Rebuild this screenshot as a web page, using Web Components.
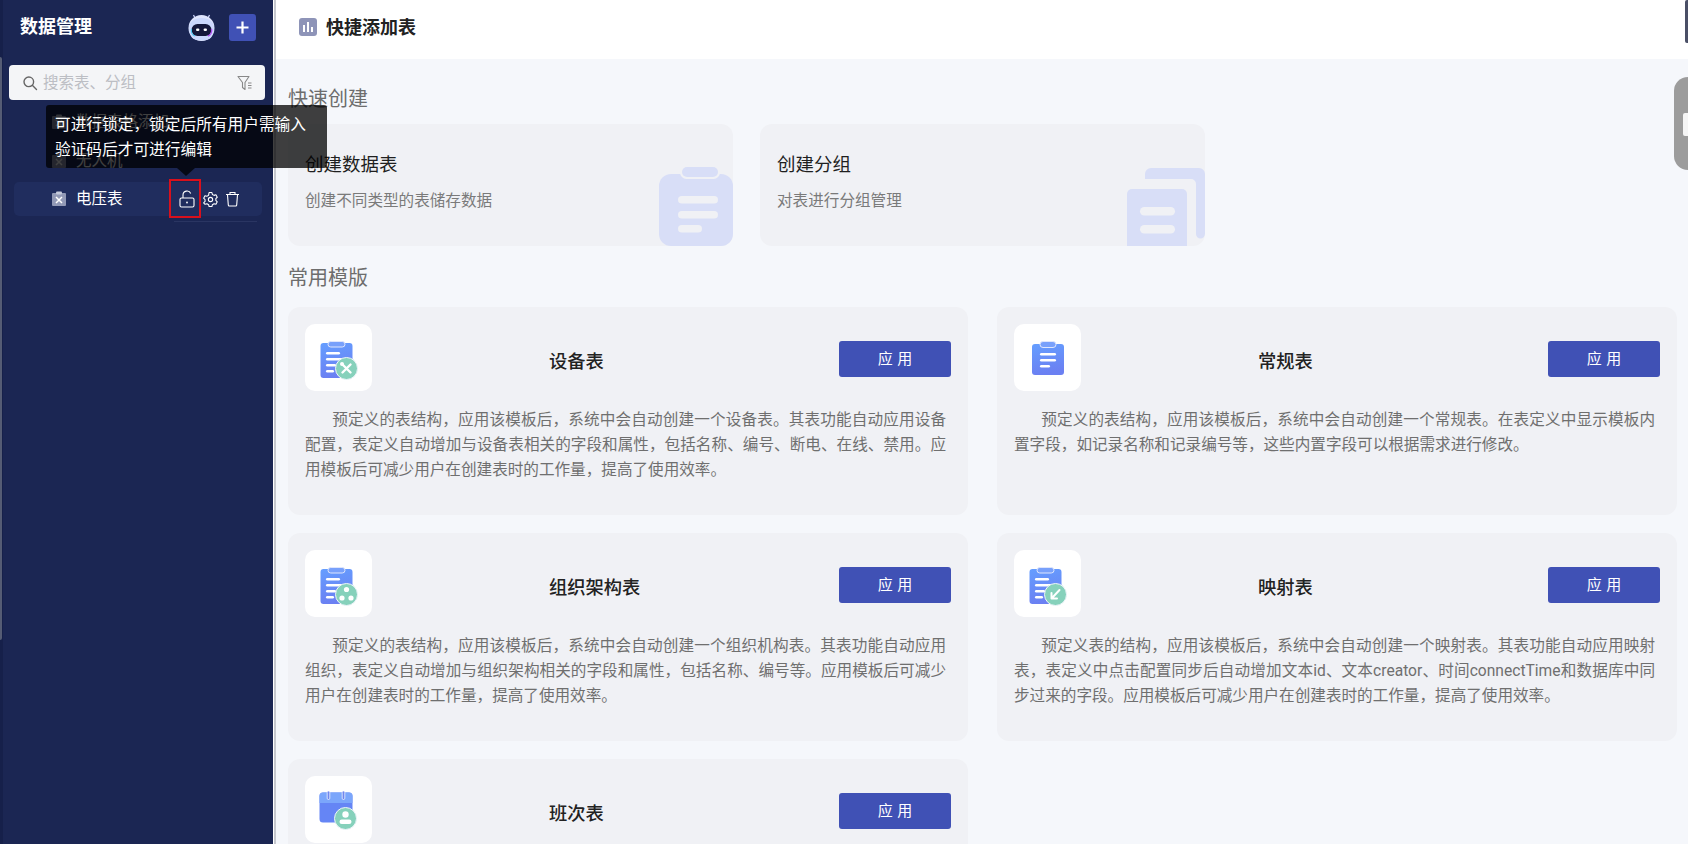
<!DOCTYPE html>
<html lang="zh"><head><meta charset="utf-8"><style>
html,body{margin:0;height:100%;overflow:hidden}
body{font-family:Roboto,"Noto Sans CJK SC",sans-serif;background:#f5f7fb}
</style></head><body>
<app-shell></app-shell>
<script>
const FONT='Roboto,"Noto Sans CJK SC",sans-serif';
const grad=(id)=>`<defs><linearGradient id="${id}" x1="0" y1="0" x2="0.2" y2="1"><stop offset="0" stop-color="#659eff"/><stop offset="1" stop-color="#6b80f2"/></linearGradient></defs>`;
const clipIcon=(id,inner)=>`<svg width="40" height="40" viewBox="0 0 40 40" style="overflow:visible">${grad(id)}
<path d="M4.500 5h26a3 3 0 0 1 3 3v29a3 3 0 0 1-3 3h-26a3 3 0 0 1-3-3V8a3 3 0 0 1 3-3z" fill="url(#${id})"/>
<rect x="9" y="3.500" width="17" height="5.500" rx="2.750" fill="#78a0fb" stroke="#dfe6fc" stroke-width="1"/>
<rect x="7" y="14" width="14" height="2.400" rx="1.200" fill="#fff"/><rect x="7" y="20" width="17" height="2.400" rx="1.200" fill="#fff"/><rect x="7" y="26" width="10" height="2.400" rx="1.200" fill="#fff"/><rect x="7" y="32" width="8" height="2.400" rx="1.200" fill="#fff"/>
<circle cx="27.500" cy="30.500" r="11" fill="#86d1bb" stroke="#eef4fa" stroke-width="1"/>${inner}</svg>`;
const ICONS={
 tool:clipIcon('a',`<path d="M23.500 26.500l8 8M31.500 26.500l-8 8" stroke="#fff" stroke-width="2.400" stroke-linecap="round"/><circle cx="23" cy="26" r="2" fill="#fff"/>`),
 plain:`<svg width="34" height="34" viewBox="0 0 34 34">${grad('b')}<path d="M4 3h26a3 3 0 0 1 3 3v25a3 3 0 0 1-3 3H4a3 3 0 0 1-3-3V6a3 3 0 0 1 3-3z" fill="url(#b)"/><rect x="9" y="0.500" width="16" height="6" rx="3" fill="#78a0fb" stroke="#dfe6fc"/><rect x="9" y="12" width="16" height="2.600" rx="1.300" fill="#fff"/><rect x="9" y="18" width="16" height="2.600" rx="1.300" fill="#fff"/><rect x="9" y="24" width="10" height="2.600" rx="1.300" fill="#fff"/></svg>`,
 org:clipIcon('c',`<circle cx="27.500" cy="25.500" r="2.600" fill="#fff"/><circle cx="23" cy="34" r="2.600" fill="#fff"/><circle cx="32" cy="34" r="2.600" fill="#fff"/>`),
 map:clipIcon('d',`<path d="M31.500 26l-8 8.500M23.500 29v5.500h5.500" stroke="#fff" stroke-width="2" fill="none" stroke-linecap="round" stroke-linejoin="round"/>`),
 cal:`<svg width="40" height="40" viewBox="0 0 40 40" style="overflow:visible"><path d="M4 2.500h26a3.500 3.500 0 0 1 3.500 3.500v23a3.500 3.500 0 0 1-3.500 3.500H4A3.500 3.500 0 0 1 .5 29V6A3.500 3.500 0 0 1 4 2.500z" fill="#6585f5"/><path d="M4 2.500h26a3.500 3.500 0 0 1 3.500 3.500v7H.5V6A3.500 3.500 0 0 1 4 2.500z" fill="#7ba6fb"/><rect x="8.200" y="1" width="2.600" height="8.500" rx="1.300" fill="#6f86ee" stroke="#fff" stroke-width=".7"/><rect x="23.200" y="1" width="2.600" height="8.500" rx="1.300" fill="#6f86ee" stroke="#fff" stroke-width=".7"/><circle cx="26.500" cy="28.500" r="11" fill="#86d1bb" stroke="#eef4fa" stroke-width="1"/><circle cx="26.500" cy="24.500" r="3.200" fill="#fff"/><rect x="20.500" y="29.500" width="12" height="4.500" rx="2.250" fill="#fff"/></svg>`
};
function def(name,html){customElements.define(name,class extends HTMLElement{constructor(){super();this.attachShadow({mode:'open'}).innerHTML=html;}});}

def('search-box',`<style>
:host{display:flex;align-items:center;height:35px;background:#f4f5f7;border-radius:4px;padding:0 12px 0 13px;color:#bcbec4;font-size:15.500px;gap:5px;line-height:1}
span{flex:1;padding-top:2px}
</style><svg width="16" height="16" viewBox="0 0 16 16" fill="none" stroke="#666" stroke-width="1.400"><circle cx="6.800" cy="6.800" r="4.800"/><path d="M10.300 10.300L14.500 14.500" stroke-linecap="round"/></svg><span>搜索表、分组</span><svg width="16" height="16" viewBox="0 0 16 16" fill="none" stroke="#888" stroke-width="1.100"><path d="M1 1.500h11L8 7.500v7L5.500 12.500V7.500z" stroke-linejoin="round"/><path d="M11 8h3.500M11 10.500h3.500M11 13h3.500"/></svg>`);

def('tree-row',`<style>
:host{display:flex;align-items:center;height:34px;box-sizing:border-box;padding:2px 0 0 37px;font-size:15.500px;color:#fff;line-height:1;position:relative}
:host([active]){background:#202d5e;border-radius:5px}
.ico{width:16px;height:16px;margin:-2px 9px 0 0;display:flex}
.actions{position:absolute;left:164px;top:0;height:34px;display:flex;align-items:center}
</style><span class="ico"><slot name="icon"></slot></span><slot></slot><div class="actions"><slot name="actions"></slot></div>`);

def('app-sidebar',`<style>
:host{display:block;position:relative;z-index:3;width:273px;height:844px;flex:none;background:#1b2653;color:#fff;box-sizing:border-box}
.edge{position:absolute;left:0;top:0;bottom:0;width:3px;background:#16204a}
.edge2{position:absolute;left:0;top:57px;height:583px;width:2px;background:#555c74;border-radius:0 3px 3px 0}
.head{display:flex;align-items:center;height:54px;padding:0 17px 0 20px;gap:14px}
.title{font-size:18px;font-weight:700;flex:1;line-height:1;padding-bottom:1px}
.add{width:27px;height:27px;border-radius:3px;background:#4051b5;display:flex;align-items:center;justify-content:center}
.bot{width:27px;height:27px}
.body{padding:11px 8px 0 9px}
.list{padding:5px 3px 0 5px;display:flex;flex-direction:column}
</style>
<div class="edge"></div><div class="edge2"></div>
<div class="head"><span class="title">数据管理</span>
<svg class="bot" viewBox="0 0 27 27"><line x1="7" y1="4" x2="5.500" y2="1" stroke="#cfd8ff" stroke-width="1.300"/><line x1="20" y1="4" x2="21.500" y2="1" stroke="#cfd8ff" stroke-width="1.300"/><circle cx="13.500" cy="14" r="13" fill="#dfe5fd"/><path d="M1 13c0-5 5-9 12.500-9S26 8 26 13c0 6-1.500 10-5 12-4 2-11 2-15 0-3.500-2-5-6-5-12z" fill="#cbd7fc"/><rect x="3.500" y="10" width="20" height="12" rx="6" fill="#14173a"/><rect x="8" y="14.500" width="3.400" height="2.600" rx="1.300" fill="#fff"/><rect x="15.600" y="14.500" width="3.400" height="2.600" rx="1.300" fill="#fff"/><path d="M20 22a6 6 0 0 0 3.500-7" stroke="#b04ef0" stroke-width="1.400" fill="none"/><path d="M7 22a6 6 0 0 1-3.500-7" stroke="#4ec7f0" stroke-width="1.200" fill="none"/></svg>
<span class="add"><svg width="13" height="13" viewBox="0 0 13 13"><path d="M6.500 0.500v12M.5 6.500h12" stroke="#fff" stroke-width="2.200"/></svg></span></div>
<div class="body"><slot name="search"></slot><div class="list"><slot></slot></div></div>
<slot name="over"></slot>`);

def('hint-tip',`<style>
:host{display:block;position:absolute;left:46px;top:105px;width:281px;height:63px;box-sizing:border-box;padding:8px 0 0 9px;background:rgba(0,0,0,.75);border-radius:3px;color:#fff;font-size:15.700px;line-height:24.500px;z-index:5;white-space:nowrap}
:host::after{content:"";position:absolute;left:131px;top:100%;border:9px solid transparent;border-top:8px solid rgba(0,0,0,.75);border-bottom:0}
</style><slot></slot>`);

def('lock-mark',`<style>
:host{display:block;position:absolute;left:169px;top:179px;width:32px;height:39px;box-sizing:border-box;border:2px solid #d8101c;z-index:6}
</style>`);

def('top-bar',`<style>
:host{display:flex;align-items:center;height:59px;box-sizing:border-box;padding:0 0 3px 23px;background:#fff;font-size:18px;font-weight:700;color:#222;gap:9px;line-height:1;position:relative}
.ic{width:18px;height:18px;margin-top:-2px;background:#8e94b8;border-radius:3px;display:flex;align-items:flex-end;justify-content:center;gap:2px;padding-bottom:4px;box-sizing:border-box}
i{display:block;width:2px;background:#fff}
.b{position:absolute;right:0;top:0;width:3px;height:43px;background:#4a4f66;border-radius:2px 0 0 2px}
</style><span class="ic"><i style="height:7px"></i><i style="height:10px"></i><i style="height:5px"></i></span><slot></slot><span class="b"></span>`);

def('section-title',`<style>
:host{display:block;font-size:20px;color:#6d6d6d;line-height:28px;height:28px;box-sizing:border-box;padding-top:2px}
</style><slot></slot>`);

def('quick-card',`<style>
:host{display:block;position:relative;width:445px;height:122px;background:#f0f1f5;border-radius:12px;box-sizing:border-box;padding:29px 17px 0;overflow:hidden}
.t{font-size:18.500px;color:#1f1f1f;line-height:24px}
.d{font-size:15.600px;color:#7a7a7a;line-height:20px;margin-top:14px}
.art{position:absolute;right:0;bottom:0;display:flex}
</style><div class="t"><slot name="t"></slot></div><div class="d"><slot name="d"></slot></div><div class="art"><slot name="art"></slot></div>`);

def('tpl-card',`<style>
:host{display:block;background:#f0f1f5;border-radius:12px;height:208px;box-sizing:border-box;padding:17px 17px 0 17px;overflow:hidden}
.top{display:flex;align-items:center}
.tile{width:67px;height:67px;background:#fff;border-radius:10px;display:flex;align-items:center;justify-content:center;flex:none}
.name{flex:1;font-size:18.300px;color:#222;line-height:24px;font-weight:500;padding:9px 0 0 177px}
.btn{width:112px;height:36px;box-sizing:border-box;padding-bottom:3px;background:#4051b5;color:#fff;border-radius:3px;font-size:15px;display:flex;align-items:center;justify-content:center;letter-spacing:4.500px;text-indent:4.500px;margin-top:3px;flex:none}
.desc{margin:16.500px 5px 0 0;font-size:15.600px;line-height:25.300px;color:#6f6f6f;text-align:justify}
.desc::before{content:"";display:inline-block;width:27px}
</style><div class="top"><div class="tile"><slot name="icon"></slot></div><div class="name"><slot name="name"></slot></div><div class="btn">应用</div></div><div class="desc"><slot></slot></div>`);

def('app-shell',`<style>
:host{display:flex;width:1688px;height:844px;overflow:hidden;background:#f5f7fb;font-family:${FONT}}
.rule{width:1px;background:#fff;flex:none;position:relative}.rule2{width:2px;background:#c6c8ce;flex:none}
main{flex:1;min-width:0;height:844px;overflow:hidden;position:relative}
.c{padding:24px 10px 0 12px}
.q{display:flex;gap:27px;margin:13px 0 16px}
.g{display:grid;grid-template-columns:680px 680px;gap:18px 29px;margin-top:17px}
.handle{position:absolute;right:0;top:77px;width:14px;height:93px;background:#9c9c9c;border-radius:14px 0 0 14px}
.handle::after{content:"";position:absolute;left:9px;top:36px;width:5px;height:23px;background:#f5f5f5;border-radius:2px 0 0 2px}
</style><slot name="side"></slot><div class="rule"></div><div class="rule2"></div>
<main><slot name="top"></slot><div class="c"><slot name="s1"></slot><div class="q"><slot name="q"></slot></div><slot name="s2"></slot><div class="g"><slot name="cards"></slot></div></div><div class="handle"></div></main>`);

const art1=`<svg width="74" height="79" viewBox="0 0 74 79"><path d="M12 7h50a12 12 0 0 1 12 12v60H12A12 12 0 0 1 0 67V19A12 12 0 0 1 12 7z" fill="#d8def7"/><rect x="21" y="-1" width="40" height="13" rx="6.500" fill="#f0f1f5"/><rect x="23" y="0" width="36" height="10" rx="5" fill="#d8def7"/><rect x="19" y="29" width="40" height="7.500" rx="3.750" fill="#f0f1f5"/><rect x="19" y="44" width="40" height="7.500" rx="3.750" fill="#f0f1f5"/><rect x="19" y="58" width="24" height="7.500" rx="3.750" fill="#f0f1f5"/></svg>`;
const art2=`<svg width="78" height="78" viewBox="0 0 78 78"><path d="M18 6a6 6 0 0 1 6-6h48a6 6 0 0 1 6 6v60a4.500 4.500 0 0 1-9 0V16a5 5 0 0 0-5-5H18z" fill="#d8def7"/><path d="M5 21h50a5 5 0 0 1 5 5v52H0V26a5 5 0 0 1 5-5z" fill="#d8def7"/><rect x="13" y="39" width="35" height="8.500" rx="4.250" fill="#f0f1f5"/><rect x="13" y="57" width="35" height="8.500" rx="4.250" fill="#f0f1f5"/></svg>`;
const g='<svg width="16" height="16" viewBox="0 0 16 16"><path d="M2 2h12a1 1 0 0 1 1 1v11a1 1 0 0 1-1 1H2a1 1 0 0 1-1-1V3a1 1 0 0 1 1-1z" fill="#9299b6"/><rect x="5" y="0.500" width="6" height="3" rx="1" fill="#c5cadb"/><path d="M5 6l6 6M11 6l-6 6" stroke="#fff" stroke-width="1.500"/></svg>';
const cards=[
['设备表','tool','预定义的表结构，应用该模板后，系统中会自动创建一个设备表。其表功能自动应用设备配置，表定义自动增加与设备表相关的字段和属性，包括名称、编号、断电、在线、禁用。应用模板后可减少用户在创建表时的工作量，提高了使用效率。'],
['常规表','plain','预定义的表结构，应用该模板后，系统中会自动创建一个常规表。在表定义中显示模板内置字段，如记录名称和记录编号等，这些内置字段可以根据需求进行修改。'],
['组织架构表','org','预定义的表结构，应用该模板后，系统中会自动创建一个组织机构表。其表功能自动应用组织，表定义自动增加与组织架构相关的字段和属性，包括名称、编号等。应用模板后可减少用户在创建表时的工作量，提高了使用效率。'],
['映射表','map','预定义表的结构，应用该模板后，系统中会自动创建一个映射表。其表功能自动应用映射表，表定义中点击配置同步后自动增加文本id、文本creator、时间connectTime和数据库中同步过来的字段。应用模板后可减少用户在创建表时的工作量，提高了使用效率。'],
['班次表','cal','']
];
document.querySelector('app-shell').innerHTML=`
<app-sidebar slot="side">
 <search-box slot="search"></search-box>
 <tree-row><span slot="icon">${g}</span>数据表格添加</tree-row>
 <tree-row style="margin-top:5px"><span slot="icon">${g}</span>无人机</tree-row>
 <tree-row active style="margin-top:4px"><span slot="icon">${g}</span>电压表
  <span slot="actions" style="display:flex;align-items:center;gap:7px">
  <svg width="18" height="18" viewBox="0 0 18 18" fill="none" stroke="#fff" stroke-width="1.100"><rect x="2" y="8" width="14" height="9" rx="1.500"/><path d="M5 8V5a4 4 0 0 1 7.700-1.500"/><circle cx="9" cy="12.500" r=".9" fill="#fff" stroke="none"/></svg>
  <svg width="15" height="15" viewBox="0 0 16 16" fill="none" stroke="#fff" stroke-width="1.150"><path d="M6.500 1h3l.5 2 1.800 1 2-.6 1.400 2.600-1.500 1.500v1.900l1.500 1.500-1.400 2.600-2-.6-1.800 1-.5 2h-3l-.5-2-1.800-1-2 .6L.7 11.900l1.500-1.500V8.500L.7 7l1.400-2.600 2 .6 1.800-1z" stroke-linejoin="round" transform="translate(0 -.4)"/><circle cx="8" cy="8" r="2.300"/></svg>
  <svg width="15" height="16" viewBox="0 0 15 16" fill="none" stroke="#fff" stroke-width="1.100"><path d="M2.500 4l.8 10a1 1 0 0 0 1 1h6.400a1 1 0 0 0 1-1l.8-10"/><path d="M1 3.500h13M5 3.500V1.500h5v2"/></svg></span>
 </tree-row>
 <div style="height:1px;background:#2a3562;margin:5px 5px 0 160px"></div>
 <hint-tip slot="over">可进行锁定，锁定后所有用户需输入<br>验证码后才可进行编辑</hint-tip>
 <lock-mark slot="over"></lock-mark>
</app-sidebar>
<top-bar slot="top">快捷添加表</top-bar>
<section-title slot="s1">快速创建</section-title>
<quick-card slot="q"><span slot="t">创建数据表</span><span slot="d">创建不同类型的表储存数据</span><span slot="art" style="display:flex">${art1}</span></quick-card>
<quick-card slot="q"><span slot="t">创建分组</span><span slot="d">对表进行分组管理</span><span slot="art" style="display:flex">${art2}</span></quick-card>
<section-title slot="s2">常用模版</section-title>
${cards.map(c=>`<tpl-card slot="cards"><span slot="icon" style="display:flex">${ICONS[c[1]]}</span><span slot="name">${c[0]}</span>${c[2]}</tpl-card>`).join('')}`;
</script></body></html>
